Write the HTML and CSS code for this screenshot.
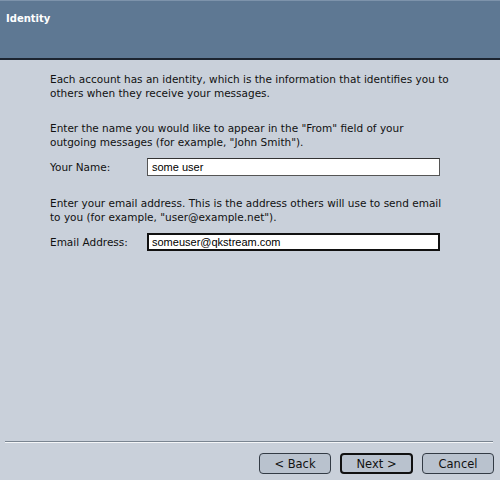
FILE: index.html
```html
<!DOCTYPE html>
<html lang="en">
<head>
    <meta charset="UTF-8">
    <title>Identity</title>
    <link rel="stylesheet" href="styles.css">
</head>
<body>

<div class="wizard">
    <!-- header band -->
    <div class="wizard-header">Identity</div>

    <div class="wizard-body">
        <p class="para-first">Each account has an identity, which is the information that identifies you to<br>others when they receive your messages.</p>

        <p>Enter the name you would like to appear in the "From" field of your<br>outgoing messages (for example, "John Smith").</p>
        <div class="field-row">
            <label for="name">Your Name:</label>
            <input id="name" type="text" value="some user">
        </div>

        <p>Enter your email address. This is the address others will use to send email<br>to you (for example, "user@example.net").</p>
        <div class="field-row">
            <label for="email">Email Address:</label>
            <input id="email" class="focused" type="text" value="someuser@qkstream.com">
        </div>
    </div>

    <div class="wizard-footer">
        <div class="separator"></div>
        <div class="buttons">
            <button>&lt; Back</button>
            <button class="default">Next &gt;</button>
            <button>Cancel</button>
        </div>
    </div>
</div>

</body>
</html>
```

FILE: styles.css
```css
body {
    margin: 0;
    font-family: "DejaVu Sans", sans-serif;
    background-color: #c9d0da;
}
.wizard {
    width: 500px;
    height: 480px;
    display: flex;
    flex-direction: column;
    background-color: #c9d0da;
}
.wizard-header {
    height: 60px;
    background-color: #5e7893;
    border-top: 1px solid #7d93ab;
    border-bottom: 2px solid #1c2430;
    color: #fff;
    font-size: 10px;
    font-weight: bold;
    padding: 12px 0 0 6px;
    box-sizing: border-box;
}
.wizard-body {
    flex: 1;
    padding: 12px 0 0 50px;
    font-size: 10.5px;
    color: #111;
}
.wizard-body p {
    margin: 0 0 9px 0;
    width: 430px;
    line-height: 14px;
}
.wizard-body .para-first {
    margin-bottom: 21px;
}
.field-row {
    display: flex;
    align-items: center;
    margin-bottom: 20px;
}
.field-row label {
    width: 97px;
}
.field-row input {
    width: 293px;
    height: 18px;
    box-sizing: border-box;
    border: 1px solid #555;
    border-top-color: #333;
    background: #fff;
    font-family: "Liberation Sans", sans-serif;
    font-size: 11px;
    padding: 0 4px;
    margin: 0;
    color: #000;
}
.field-row input.focused {
    border: 2px solid #111;
    padding: 0 3px;
}
.wizard-footer {
    padding-bottom: 6px;
}
.separator {
    margin: 0 7px 0 5px;
    border-top: 1px solid #7a8591;
    border-bottom: 1px solid #f4f6f8;
}
.buttons {
    display: flex;
    justify-content: flex-end;
    gap: 9px;
    padding: 10px 6px 0 0;
}
.buttons button {
    width: 72px;
    height: 21px;
    border: 1px solid #333b45;
    border-radius: 4px;
    background-color: #b9c2ce;
    font-family: "DejaVu Sans", sans-serif;
    font-size: 11.5px;
    color: #111;
    padding: 0;
}
.buttons button.default {
    border: 2px solid #111;
    width: 73px;
}
```
